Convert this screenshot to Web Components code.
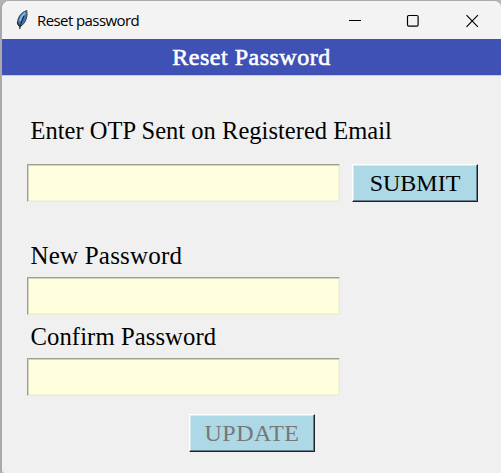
<!DOCTYPE html>
<html lang="en">
<head>
<meta charset="utf-8">
<title>Reset password</title>
<style>
html,body{margin:0;height:100%;overflow:hidden;background:#b4b4b4}
</style>
</head>
<body>
<reset-window></reset-window>
<script>
const define = (name, html) => customElements.define(name, class extends HTMLElement {
  constructor() {
    super();
    this.attachShadow({mode: 'open'}).innerHTML = html;
  }
});

define('window-bar', `
<style>
:host{display:flex;align-items:center;height:37px;padding:1px 0 0 13px;background:#f3f3f3;color:#000;font:15px "Open Sans","Noto Sans",sans-serif}
.feather{width:16px;height:22px;margin:-2px 6px 0 0;flex:none}
.title{flex:1;white-space:nowrap;letter-spacing:-.58px;line-height:20px;padding-bottom:2px}
.controls{display:flex}
.controls svg{width:58.5px;height:36px;display:block}
</style>
<svg class="feather" viewBox="0 0 16 22">
<path d="M11.800 1.500Q7.500 2.500 4.500 7Q1.800 11 2.800 15.500L5 18Q9.300 15 10.900 11Q12.800 6.500 11.800 1.500Z" fill="#3b78bb" stroke="#3e4248" stroke-width="1"/>
<path d="M10.300 3.500Q6.500 6.500 4.800 12" fill="none" stroke="#82b4e6" stroke-width="2"/>
<path d="M9 7Q6.500 12 4.600 20M2.200 13L4.500 17.500" fill="none" stroke="#20242b" stroke-width="1.100"/>
</svg>
<span class="title"><slot></slot></span>
<span class="controls">
<svg viewBox="0 0 58.500 36"><path d="M23 17.500h12" stroke="#000" stroke-width="1"/></svg>
<svg viewBox="0 0 58.500 36"><rect x="23.500" y="12.500" width="10.600" height="10.600" rx="1.300" fill="none" stroke="#000" stroke-width="1.200"/></svg>
<svg viewBox="0 0 58.500 36"><path d="M23.500 12.200l11.400 11.600M34.900 12.200l-11.400 11.600" stroke="#000" stroke-width="1.150"/></svg>
</span>`);

define('page-banner', `
<style>
:host{display:block;height:36px;background:#3f51b5;border-bottom:1px solid #c5cae6;color:#fff;text-align:center;font:24px/37px "Liberation Serif",serif;letter-spacing:.5px;-webkit-text-stroke:.6px #fff;white-space:nowrap}
</style><slot></slot>`);

define('field-label', `
<style>
:host{display:block;font:var(--size,24px)/30px "Liberation Serif",serif;color:#000;white-space:nowrap;padding-left:3.5px;letter-spacing:var(--track,0)}
</style><slot></slot>`);

define('text-entry', `
<style>
:host{display:block;box-sizing:border-box;width:313px;height:38px;background:#ffffdf;border:1px solid;border-color:#a0a08e #ededd0 #ededd0 #a0a08e;box-shadow:inset 1px 1px #d4d4ba,inset -1px -1px #f3f3d5}
</style>`);

define('push-button', `
<style>
:host{display:block;width:126px;height:38px}
button{display:block;box-sizing:border-box;width:100%;height:100%;margin:0;padding:0;background:#add8e6;border:1px solid;border-color:#fff #1c2428 #1c2428 #fff;box-shadow:inset -1px -1px #65808a,inset 1px 1px #d2eaf2;color:#000;font:24px/34px "Liberation Serif",serif;letter-spacing:var(--track,0)}
:host([disabled]) button{color:#777}
</style><button><slot></slot></button>`);

define('reset-window', `
<style>
:host{display:flex;flex-direction:column;box-sizing:border-box;height:100vh;border:solid #aaa;border-width:1px 0 0 2px;border-radius:9px 7px 0 4px;background:#f0f0f0;overflow:hidden}
main{display:flex;flex-direction:column;padding:40px 0 0 25px}
.row{display:flex;gap:12px}
.otp{--size:24.5px;--track:.03px}
.first{margin-top:18px}
.new{margin-top:39px;--size:25px;--track:.2px}
.entry{margin-top:6px}
.confirm{margin-top:7px;--size:24.7px;--track:.07px}
.confirm + text-entry{margin-top:6px}
.update{margin:18px 0 0 162px;--track:.5px}
</style>
<window-bar>Reset password</window-bar>
<page-banner>Reset Password</page-banner>
<main>
<field-label class="otp">Enter OTP Sent on Registered Email</field-label>
<div class="row first"><text-entry></text-entry><push-button>SUBMIT</push-button></div>
<field-label class="new">New Password</field-label>
<text-entry class="entry"></text-entry>
<field-label class="confirm">Confirm Password</field-label>
<text-entry></text-entry>
<push-button class="update" disabled>UPDATE</push-button>
</main>`);
</script>
</body>
</html>
